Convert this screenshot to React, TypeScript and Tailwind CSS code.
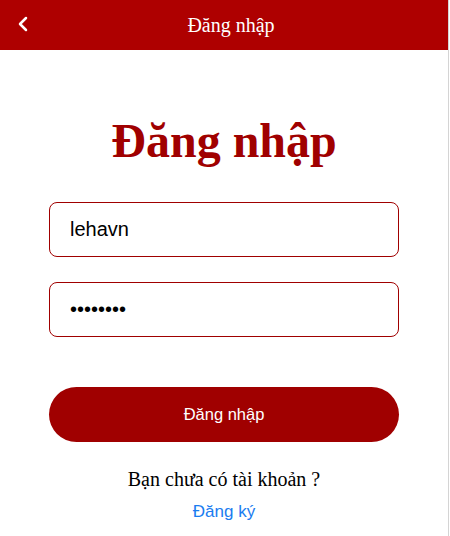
import { ChevronLeft } from "lucide-react";

export default function App() {
  return (
    <div className="w-[449px] h-[536px] bg-white border-r border-[#d4d4d4] overflow-hidden">
      {/* Header */}
      <header className="relative h-[50px] bg-[#ae0000] flex items-center justify-center pl-[14px]">
        <button className="absolute left-[11px] top-[12px] text-white">
          <ChevronLeft size={24} strokeWidth={2.5} />
        </button>
        <h2 className="text-white text-[20px] font-['Liberation_Serif',serif]">Đăng nhập</h2>
      </header>

      <div className="w-[350px] mx-auto">
        <h1 className="mt-[67px] text-center text-[48px] leading-none font-bold text-[#a00000] font-['Liberation_Serif',serif]">
          Đăng nhập
        </h1>

        <form className="mt-[37px] flex flex-col">
          <input
            type="text"
            defaultValue="lehavn"
            className="h-[55px] w-full rounded-lg border border-[#a00000] px-5 text-[20px] text-black outline-none font-['Liberation_Sans',sans-serif]"
          />
          <input
            type="password"
            defaultValue="12345678"
            className="mt-[25px] h-[55px] w-full rounded-lg border border-[#a00000] px-5 text-[20px] text-black outline-none font-['Liberation_Sans',sans-serif]"
          />
          <button
            type="button"
            className="mt-[50px] h-[55px] w-full rounded-full bg-[#a00000] text-white text-[16.5px] font-['Liberation_Sans',sans-serif]"
          >
            Đăng nhập
          </button>
        </form>

        <p className="mt-[27px] text-center text-[20px] leading-none text-black font-['Liberation_Serif',serif]">
          Bạn chưa có tài khoản ?
        </p>
        <a className="mt-[14px] block text-center text-[17px] leading-none text-[#1a7cf0] font-['Liberation_Sans',sans-serif]">
          Đăng ký
        </a>
      </div>
    </div>
  );
}
